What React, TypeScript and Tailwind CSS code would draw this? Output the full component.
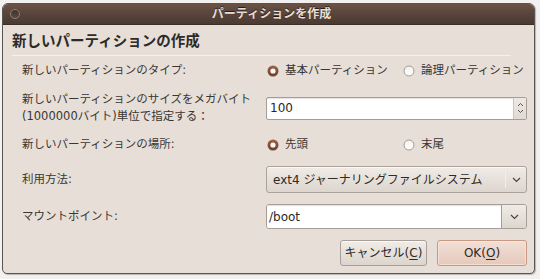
import React from "react";

const FONT = { fontFamily: '"DejaVu Sans", "Noto Sans CJK JP", sans-serif' };

function Radio({ checked }: { checked: boolean }) {
  return (
    <svg width="12" height="12" viewBox="0 0 12 12" className="shrink-0">
      <defs>
        <linearGradient id="rb" x1="0" y1="0" x2="0" y2="1">
          <stop offset="0" stopColor="#9a6248" />
          <stop offset="1" stopColor="#6d3f2b" />
        </linearGradient>
        <linearGradient id="rw" x1="0" y1="0" x2="0" y2="1">
          <stop offset="0" stopColor="#f4f1ee" />
          <stop offset="1" stopColor="#ffffff" />
        </linearGradient>
      </defs>
      {checked ? (
        <>
          <circle cx="6" cy="6" r="5.5" fill="url(#rb)" />
          <circle cx="6" cy="6" r="2.6" fill="#fbf6f3" />
        </>
      ) : (
        <circle cx="6" cy="6" r="5" fill="url(#rw)" stroke="#a39a92" strokeWidth="1" />
      )}
    </svg>
  );
}

function Chevron() {
  return (
    <svg width="9" height="6" viewBox="0 0 9 6">
      <path d="M1 1 L4.5 4.5 L8 1" fill="none" stroke="#4a4540" strokeWidth="1.2" />
    </svg>
  );
}

export default function App() {
  return (
    <div className="w-[540px] h-[279px] bg-[#f3f1ef] pl-[2px] pt-[3px] overflow-hidden" style={FONT}>
      <div className="w-[533px] h-[271px] flex flex-col rounded-t-[6px] rounded-b-[5px] border border-[#5a5450] bg-[#e7dfd7] overflow-hidden shadow-[1px_1px_1px_rgba(0,0,0,0.25)]">
        {/* title bar */}
        <div className="relative h-[21px] shrink-0 bg-gradient-to-b from-[#6b5247] via-[#58443a] to-[#4a3a32] border-b border-[#3a2e28] flex items-center justify-center">
          <div className="absolute left-[7px] top-[5px] w-[10px] h-[10px] rounded-full border border-[#8d7e75] bg-gradient-to-b from-[#3e332d] to-[#5a4a41]" />
          <span className="text-[12px] font-bold text-[#e4dfd7] pl-[6px] [text-shadow:0_-1px_0_rgba(0,0,0,0.6)]">
            パーティションを作成
          </span>
        </div>

        {/* body */}
        <div className="flex flex-col pl-[9px] text-[#3a3633]">
          <div className="h-[18px] mt-[8px] flex items-center text-[14.5px] font-bold text-[#2e2a27]">
            新しいパーティションの作成
          </div>
          <div className="mt-[4px] w-[499px] h-px bg-[#cbc3bb] border-b border-[#f5f1ed]" />

          <div className="pl-[10px] flex flex-col text-[11.5px]">
            {/* row 1 */}
            <div className="mt-[5px] h-[20px] flex items-center">
              <div className="w-[244px]">新しいパーティションのタイプ:</div>
              <div className="flex items-center">
                <div className="w-[137px] flex items-center gap-[6px] pl-[1px]">
                  <Radio checked />
                  <span>基本パーティション</span>
                </div>
                <div className="flex items-center gap-[6px]">
                  <Radio checked={false} />
                  <span>論理パーティション</span>
                </div>
              </div>
            </div>

            {/* row 2 */}
            <div className="mt-[8px] h-[38px] flex items-center">
              <div className="w-[244px] leading-[17px]">
                新しいパーティションのサイズをメガバイト
                <br />
                (1000000バイト)単位で指定する：
              </div>
              <div className="w-[261px] h-[23px] flex rounded-[2px] border border-[#a69e96] bg-white overflow-hidden">
                <div className="flex-1 flex items-center pl-[3px] text-[12px] text-[#2a2725] shadow-[inset_0_1px_1px_rgba(0,0,0,0.12)]">
                  100
                </div>
                <div className="w-[13px] flex flex-col items-center justify-center bg-gradient-to-b from-[#eee9e4] to-[#e1dad3] border-l border-[#cfc7bf]">
                  <svg width="7" height="16" viewBox="0 0 7 16">
                    <path d="M1 6 L3.5 3.5 L6 6" fill="none" stroke="#5a544e" strokeWidth="1" />
                    <path d="M1 10 L3.5 12.5 L6 10" fill="none" stroke="#5a544e" strokeWidth="1" />
                  </svg>
                </div>
              </div>
            </div>

            {/* row 3 */}
            <div className="mt-[8px] h-[20px] flex items-center">
              <div className="w-[244px]">新しいパーティションの場所:</div>
              <div className="flex items-center">
                <div className="w-[137px] flex items-center gap-[6px] pl-[1px]">
                  <Radio checked />
                  <span>先頭</span>
                </div>
                <div className="flex items-center gap-[6px]">
                  <Radio checked={false} />
                  <span>末尾</span>
                </div>
              </div>
            </div>

            {/* row 4 */}
            <div className="mt-[11px] h-[27px] flex items-center">
              <div className="w-[244px]">利用方法:</div>
              <div className="w-[261px] h-[27px] flex items-center rounded-[3px] border border-[#aaa29a] bg-gradient-to-b from-[#f0ebe6] to-[#ddd6cf] shadow-[inset_0_1px_0_rgba(255,255,255,0.7)]">
                <div className="flex-1 pl-[6px] text-[12px] text-[#2e2a27]">ext4 ジャーナリングファイルシステム</div>
                <div className="w-px h-[17px] bg-[#b5ada5] border-r border-[#f3efeb]" />
                <div className="w-[20px] flex items-center justify-center">
                  <Chevron />
                </div>
              </div>
            </div>

            {/* row 5 */}
            <div className="mt-[11px] h-[25px] flex items-center">
              <div className="w-[244px]">マウントポイント:</div>
              <div className="w-[261px] h-[25px] flex rounded-[3px] border border-[#a69e96] overflow-hidden">
                <div className="flex-1 bg-white flex items-center pl-[2px] text-[12px] text-[#2a2725] shadow-[inset_0_1px_1px_rgba(0,0,0,0.12)] border-r border-[#a69e96]">
                  /boot
                </div>
                <div className="w-[24px] flex items-center justify-center bg-gradient-to-b from-[#f0ebe6] to-[#ddd6cf]">
                  <Chevron />
                </div>
              </div>
            </div>
          </div>

          {/* buttons */}
          <div className="mt-[11px] pl-[328px] flex gap-[10px] text-[12px]">
            <div className="w-[87px] h-[26px] flex items-center justify-center rounded-[3px] border border-[#a8a098] bg-gradient-to-b from-[#f1ece7] to-[#dcd5ce] text-[#2e2a27] shadow-[inset_0_1px_0_rgba(255,255,255,0.7)]">
              キャンセル(<span className="underline underline-offset-2">C</span>)
            </div>
            <div className="w-[90px] h-[26px] flex items-center justify-center rounded-[3px] border border-[#c99883] bg-gradient-to-b from-[#f1dfd6] to-[#e6c9bb] text-[#2e2a27] shadow-[inset_0_0_0_1px_rgba(255,235,225,0.6)]">
              OK(<span className="underline underline-offset-2">O</span>)
            </div>
          </div>
        </div>
      </div>
    </div>
  );
}
